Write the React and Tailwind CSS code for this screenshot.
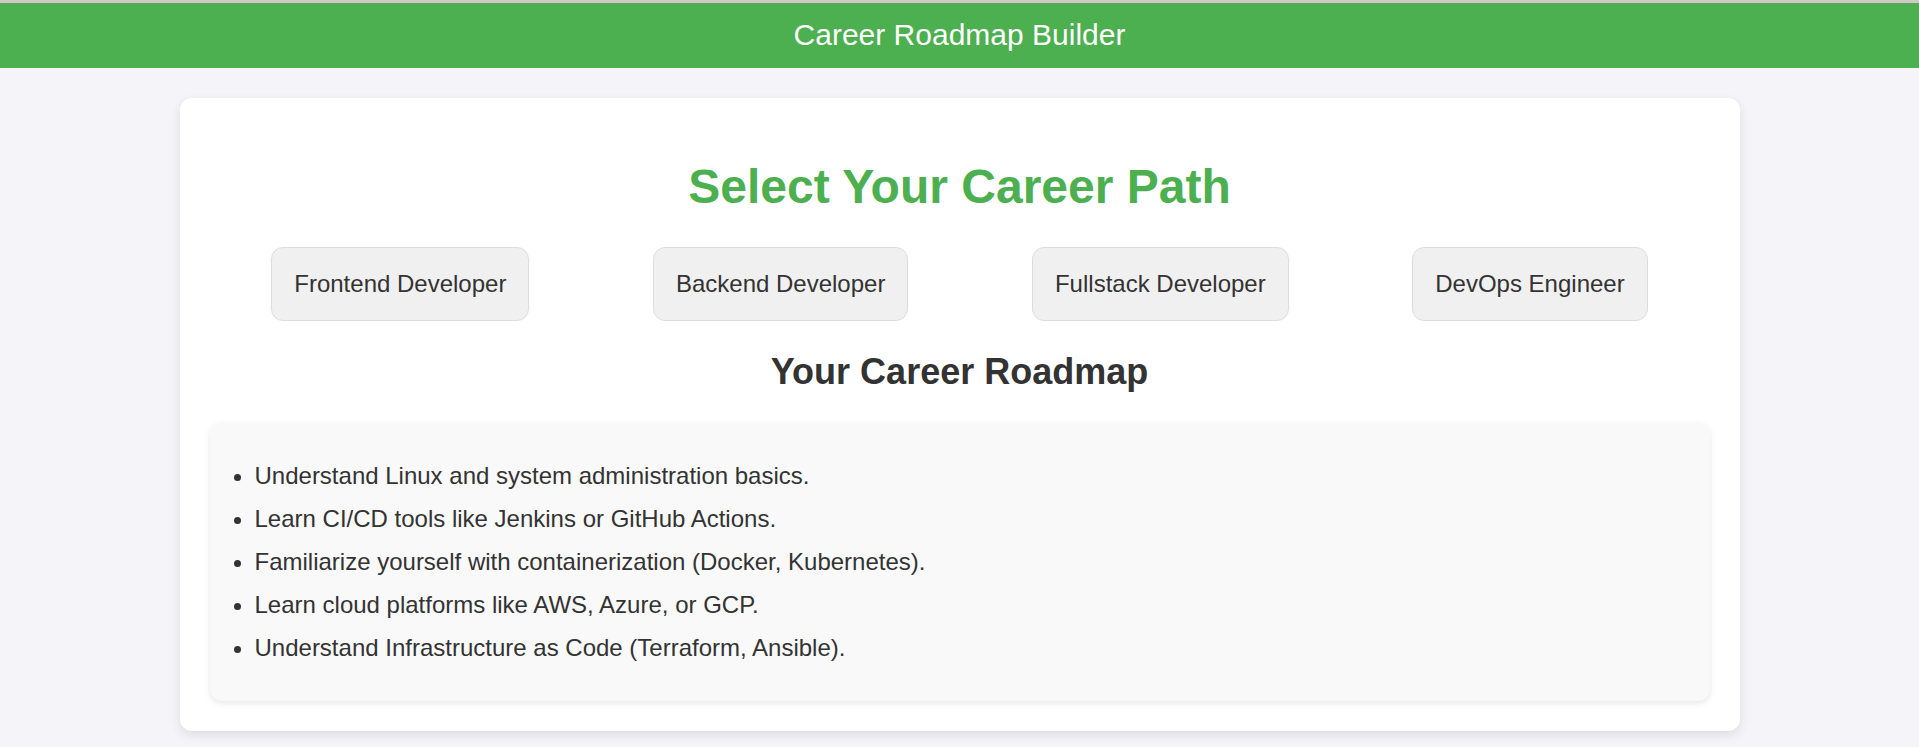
export default function App() {
  const paths = [
    "Frontend Developer",
    "Backend Developer",
    "Fullstack Developer",
    "DevOps Engineer",
  ];
  const steps = [
    "Understand Linux and system administration basics.",
    "Learn CI/CD tools like Jenkins or GitHub Actions.",
    "Familiarize yourself with containerization (Docker, Kubernetes).",
    "Learn cloud platforms like AWS, Azure, or GCP.",
    "Understand Infrastructure as Code (Terraform, Ansible).",
  ];
  return (
    <div className="min-h-[747px] bg-[#f4f4f9] font-['Liberation_Sans',Arial,sans-serif] text-[#333]">
      <div className="h-[3px] bg-[#d4c6c6]" />
      <header className="bg-[#4caf50] py-[15px] text-center text-[30px] leading-[34.5px] text-white">
        Career Roadmap Builder
      </header>
      <main className="mx-auto mt-[30px] w-[1560px] rounded-[12px] bg-white p-[30px] shadow-[0_4px_12px_rgba(0,0,0,0.1)]">
        <h1 className="mt-[31px] text-center text-[48px] font-bold leading-[55px] text-[#4caf50]">
          Select Your Career Path
        </h1>
        <div className="mt-[33px] flex justify-around">
          {paths.map((p) => (
            <button
              key={p}
              className="rounded-[12px] border border-[#ddd] bg-[#f0f0f0] p-[22px] text-[24px] leading-[28px] text-[#333]"
            >
              {p}
            </button>
          ))}
        </div>
        <h2 className="mt-[30px] text-center text-[36px] font-bold leading-[41px]">
          Your Career Roadmap
        </h2>
        <div className="mt-[31px] rounded-[12px] bg-[#f9f9f9] px-[15px] py-[15px] shadow-[0_2px_6px_rgba(0,0,0,0.1)]">
          <ul className="my-[24px] list-disc pl-[30px] text-[24px] leading-[28px]">
            {steps.map((s) => (
              <li key={s} className="mb-[15px]">
                {s}
              </li>
            ))}
          </ul>
        </div>
      </main>
    </div>
  );
}
